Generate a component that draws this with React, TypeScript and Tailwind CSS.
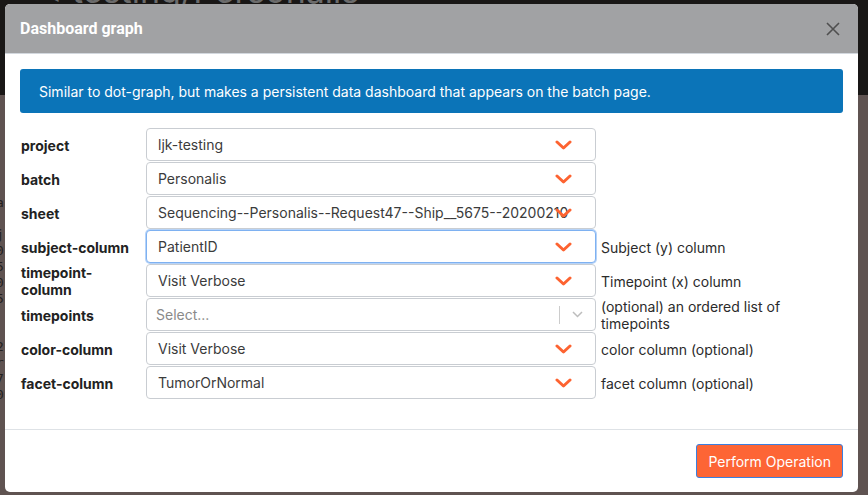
import React from "react";

const Chevron = () => (
  <svg width="17" height="10" viewBox="0 0 17 10" className="shrink-0">
    <polyline points="2,2 8.5,8 15,2" fill="none" stroke="#fd6331" strokeWidth="3" strokeLinecap="round" strokeLinejoin="round" />
  </svg>
);

type Row = { label: React.ReactNode; value?: string; help?: React.ReactNode; focused?: boolean; placeholder?: boolean };

const rows: Row[] = [
  { label: "project", value: "ljk-testing" },
  { label: "batch", value: "Personalis" },
  { label: "sheet", value: "Sequencing--Personalis--Request47--Ship__5675--20200210" },
  { label: "subject-column", value: "PatientID", help: "Subject (y) column", focused: true },
  { label: <>timepoint-<br />column</>, value: "Visit Verbose", help: "Timepoint (x) column" },
  { label: "timepoints", placeholder: true, help: <>(optional) an ordered list of<br />timepoints</> },
  { label: "color-column", value: "Visit Verbose", help: "color column (optional)" },
  { label: "facet-column", value: "TumorOrNormal", help: "facet column (optional)" },
];

export default function App() {
  const bgChars = ["a", "", "j", "0", "5", "0", "5", "", "", "2", "r", "7", "0"];
  return (
    <div className="relative w-[868px] h-[495px] overflow-hidden bg-[#5f5351]" style={{ fontFamily: "Inter, 'Noto Sans', sans-serif" }}>
      {/* background page */}
      <div className="h-[95px] bg-[#191716] pl-[40px] pt-0 overflow-hidden">
        <div className="text-[34px] leading-none text-[#6b6b6b] -mt-[26px]" style={{ fontFamily: "Inter, sans-serif" }}>&lt; testing/Personalis</div>
      </div>
      <div className="flex flex-col pt-[100px] text-[13px] leading-[16px] text-[#231f1f] -ml-[4px]" style={{ fontFamily: "'DejaVu Sans Mono', monospace" }}>
        {bgChars.map((c, i) => (
          <div key={i} className="h-[16px]">{c}</div>
        ))}
      </div>

      {/* modal */}
      <div className="absolute left-[5px] top-[4px] w-[853px] h-[488px] bg-white rounded-[5px] overflow-hidden flex flex-col">
        <div className="h-[50px] shrink-0 bg-[#a1a2a4] border-b border-[#d3d8de] flex items-center justify-between pl-[15px] pr-[18px]">
          <div className="text-white font-bold text-[16px]" style={{ fontFamily: "Roboto, sans-serif" }}>Dashboard graph</div>
          <svg width="14" height="14" viewBox="0 0 14 14">
            <path d="M1 1 L13 13 M13 1 L1 13" stroke="#4f4f4f" strokeWidth="1.6" fill="none" />
          </svg>
        </div>

        <div className="flex-1 px-[15px] pt-[15px]">
          <div className="h-[44px] bg-[#0b74b8] rounded-[3px] flex items-center pl-[19px] text-white text-[14px]">
            Similar to dot-graph, but makes a persistent data dashboard that appears on the batch page.
          </div>

          <div className="mt-[15px] flex flex-col">
            {rows.map((r, i) => (
              <div key={i} className="h-[34px] flex items-center">
                <div className="w-[126px] shrink-0 pl-px font-bold text-[14px] leading-[17px] text-[#222]">{r.label}</div>
                <div
                  className={
                    "self-start w-[450px] h-[33px] shrink-0 rounded-[4px] bg-white flex items-center relative " +
                    (r.focused ? "border border-[#7eb1f1] shadow-[0_0_0_1px_#b6d3f8]" : "border border-[#c9cdd2]")
                  }
                >
                  {r.placeholder ? (
                    <>
                      <div className="flex-1 pl-[9px] text-[14px] text-[#8a8a8a]">Select...</div>
                      <div className="w-px h-[18px] bg-[#cccccc]" />
                      <div className="w-[35px] flex justify-center">
                        <svg width="11" height="7" viewBox="0 0 11 7">
                          <polyline points="1,1 5.5,5.5 10,1" fill="none" stroke="#bdbdbd" strokeWidth="1.5" />
                        </svg>
                      </div>
                    </>
                  ) : (
                    <>
                      <div className="w-[430px] pl-[11px] overflow-hidden whitespace-nowrap text-[14px] text-[#3b3b3b]">{r.value}</div>
                      <div className="absolute right-[23px] top-[11px]">
                        <Chevron />
                      </div>
                    </>
                  )}
                </div>
                <div className="pl-[5px] text-[14px] leading-[17px] text-[#2b2b2b]">{r.help}</div>
              </div>
            ))}
          </div>
        </div>

        <div className="h-[63px] shrink-0 border-t border-[#dee2e6] flex items-center justify-end pr-[15px]">
          <button className="h-[34px] px-[11px] rounded-[3px] bg-[#fd6535] border border-[#3a7fe0] text-white text-[14px]">
            Perform Operation
          </button>
        </div>
      </div>
    </div>
  );
}
